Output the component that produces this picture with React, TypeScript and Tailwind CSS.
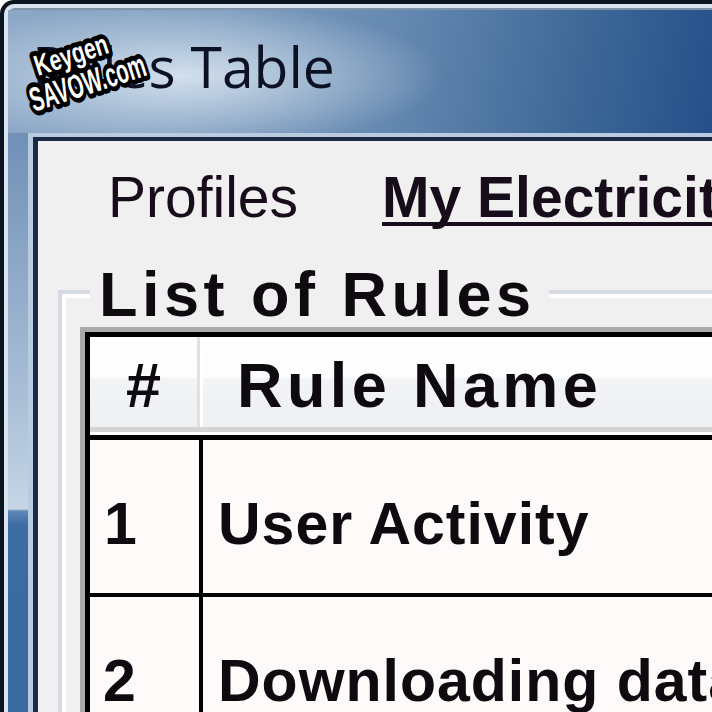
import React from "react";

const sans = "font-['Liberation_Sans','Arial',sans-serif]";

function Watermark() {
  return (
    <svg
      className="pointer-events-none absolute left-0 top-0"
      width="190"
      height="140"
      viewBox="0 0 190 140"
    >
      <g
        fontFamily="'Liberation Sans', Arial, sans-serif"
        fontWeight="bold"
        fill="#ffffff"
        stroke="#000000"
        strokeLinejoin="round"
        style={{ paintOrder: "stroke fill" }}
      >
        <text
          x="34"
          y="112"
          fontSize="34"
          strokeWidth="10"
          textLength="120"
          lengthAdjust="spacingAndGlyphs"
          transform="rotate(-18 34 112)"
        >
          SAVOW.com
        </text>
        <text
          x="38"
          y="76"
          fontSize="29"
          strokeWidth="10"
          textLength="76"
          lengthAdjust="spacingAndGlyphs"
          transform="rotate(-18 38 76)"
        >
          Keygen
        </text>
      </g>
    </svg>
  );
}

function HeaderRow() {
  return (
    <div className="flex h-[90px] bg-[linear-gradient(180deg,#fefefe_0px,#fdfdfd_40px,#f2f3f5_42px,#eef0f2_90px)]">
      <div className={`w-[107px] shrink-0 pt-[17px] text-center text-[63px] font-bold leading-none text-[#0e0a10] ${sans}`}>
        #
      </div>
      <div className="flex w-[6px] shrink-0">
        <div className="w-[3px] bg-[#dfe1e4]" />
        <div className="w-[3px] bg-white" />
      </div>
      <div className={`min-w-0 flex-1 whitespace-nowrap pl-[34px] pt-[17px] text-[63px] font-bold leading-none tracking-[4.4px] text-[#0e0a10] ${sans}`}>
        Rule Name
      </div>
    </div>
  );
}

function DataRow({ n, name, pl }: { n: string; name: string; pl: string }) {
  return (
    <div className={`flex h-[153px] bg-[#fdfaf9] text-[59px] font-bold leading-none tracking-[1px] text-[#0e0a10] ${sans}`}>
      <div className={`w-[109px] shrink-0 pt-[55px] ${pl}`}>{n}</div>
      <div className="w-[4px] shrink-0 bg-black" />
      <div className="min-w-0 flex-1 overflow-hidden whitespace-nowrap pl-[15px] pt-[55px]">{name}</div>
    </div>
  );
}

export default function App() {
  return (
    <div className="relative h-[712px] w-[712px] overflow-hidden bg-white">
      {/* window outer frame */}
      <div className="h-full rounded-tl-[14px] bg-[#0b1520] pl-[4px] pt-[4px]">
        <div className="h-full rounded-tl-[10px] bg-[#dbe5ef] pl-[4px] pt-[4px]">
          <div className="flex h-full flex-col rounded-tl-[7px] border-t-2 border-[#7f93a8] bg-[#6f8fb5]">
            {/* glass caption */}
            <div className="h-[123px] shrink-0 bg-[radial-gradient(ellipse_260px_75px_at_175px_66px,rgba(232,240,248,0.8),rgba(232,240,248,0)),linear-gradient(100deg,#8ca8c7_0%,#7b9bbe_30%,#6488b0_55%,#3f6898_80%,#24508a_100%)] pl-[24px] pt-[28px]">
              <div className="whitespace-nowrap font-['Open_Sans',sans-serif] text-[57px] leading-none text-[#0c1224]">
                Rules Table
              </div>
            </div>

            <div className="flex min-h-0 flex-1">
              {/* glass left edge */}
              <div className="w-[20px] shrink-0 bg-[linear-gradient(180deg,#7090b6_0px,#b6c9de_320px,#c7d6e5_376px,#5f88b6_378px,#3d6ba3_392px,#3a68a0_100%)]" />

              {/* client frame */}
              <div className="min-w-0 flex-1 border-l-[5px] border-t-4 border-[#b8cbdf]">
                <div className="h-full border-l-[5px] border-t-4 border-[#1b2b45] bg-[#f0f0f0]">
                  {/* tab links */}
                  <div className={`flex whitespace-nowrap pl-[70px] pt-[28px] text-[57px] leading-none text-[#170c1a] ${sans}`}>
                    <span>Profiles</span>
                    <span className="ml-[84px] font-bold underline decoration-[4px] underline-offset-[5px] [text-decoration-skip-ink:none]">
                      My Electricity
                    </span>
                  </div>

                  {/* group box */}
                  <div className="ml-[20px] mt-[64px] border-l-4 border-t-4 border-[#d5dbe1]">
                    <div className="border-l-4 border-t-4 border-white">
                      <div className={`-mt-[35px] ml-[24px] w-fit whitespace-nowrap bg-[#f0f0f0] pl-[9px] pr-[13px] text-[63px] font-bold leading-none tracking-[4.5px] text-[#0e0a10] ${sans}`}>
                        List of Rules
                      </div>

                      {/* rules table */}
                      <div className="ml-[14px] mt-[1px] border-l-[5px] border-t-[5px] border-[#a9a9a9]">
                        <div className="border-l-[5px] border-t-[5px] border-black">
                          <HeaderRow />
                          <div className="h-[5px] bg-[#d4d4d4]" />
                          <div className="h-[3px] bg-white" />
                          <div className="h-[5px] bg-black" />
                          <DataRow n="1" name="User Activity" pl="pl-[14px]" />
                          <div className="h-[4px] bg-black" />
                          <DataRow n="2" name="Downloading data" pl="pl-[13px]" />
                        </div>
                      </div>
                    </div>
                  </div>
                </div>
              </div>
            </div>
          </div>
        </div>
      </div>
      <Watermark />
    </div>
  );
}
